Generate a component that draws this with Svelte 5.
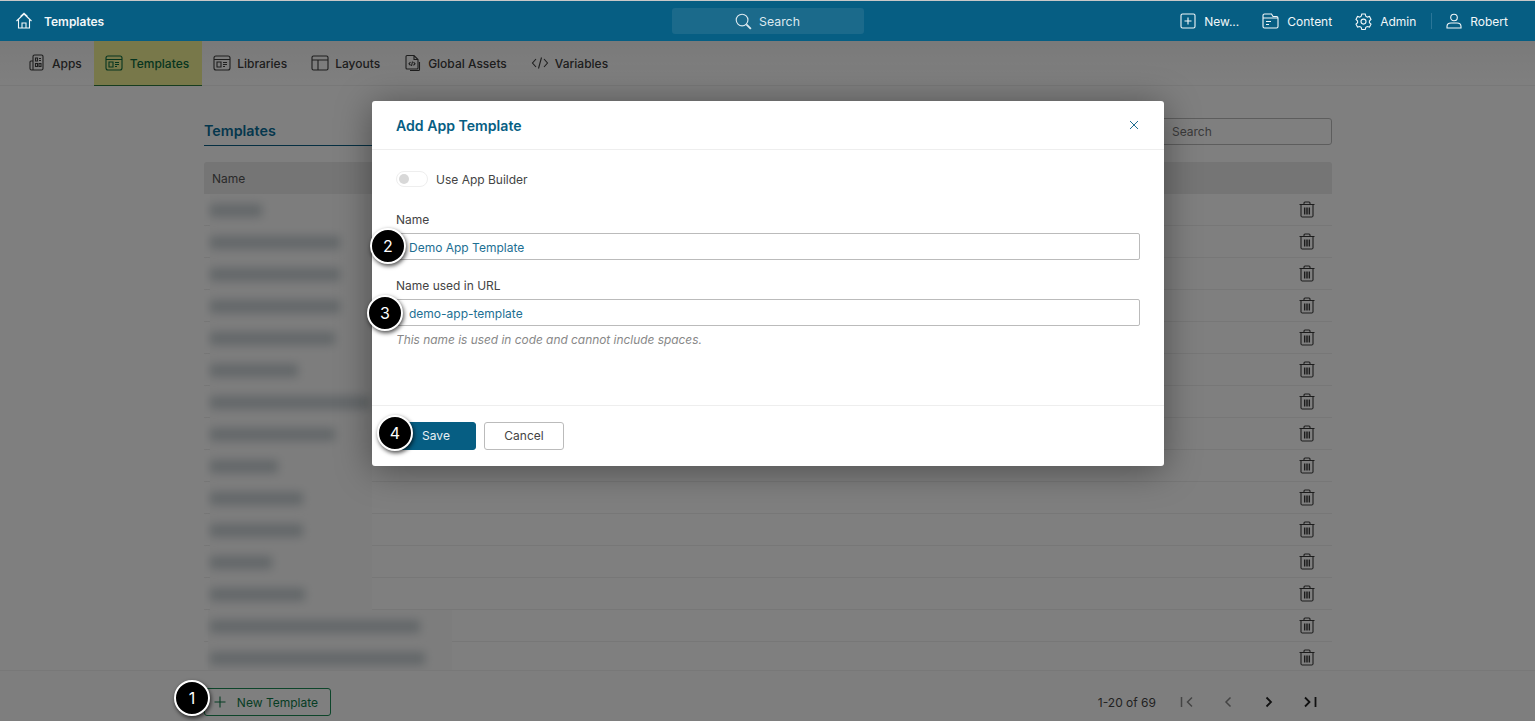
<script>
  const tabs = [
    { name: "Apps", icon: "apps" },
    { name: "Templates", icon: "tpl", active: true },
    { name: "Libraries", icon: "tpl" },
    { name: "Layouts", icon: "layout" },
    { name: "Global Assets", icon: "assets" },
    { name: "Variables", icon: "code" }
  ];
  // widths of the blurred names in the list
  const rows = [52, 130, 130, 130, 125, 88, 160, 125, 68, 93, 93, 62, 95, 210, 215];
</script>

<div class="page">
  <header class="topbar">
    <div class="brand">
      <svg width="18" height="18" viewBox="0 0 18 18" fill="none" stroke="currentColor" stroke-width="1.1">
        <path d="M1.5 9 9 2l7.5 7M3.5 7.5V16h11V7.5M7 16v-5h4v5M5.5 4.5 9 1.2l3.5 3.3" />
      </svg>
      <span>Templates</span>
    </div>
    <div class="search-wrap">
      <div class="search">
        <svg width="17" height="17" viewBox="0 0 18 18" fill="none" stroke="currentColor" stroke-width="1.2">
          <circle cx="7.5" cy="7.5" r="6.2" />
          <path d="m12 12 4.8 4.8" stroke-width="2" />
        </svg>
        <span>Search</span>
      </div>
    </div>
    <nav class="actions">
      <div class="action">
        <svg width="16" height="16" viewBox="0 0 16 16" fill="none" stroke="currentColor" stroke-width="1.1">
          <rect x="1" y="1" width="14" height="14" rx="1.5" />
          <path d="M8 4.5v7M4.5 8h7" />
        </svg>
        <span>New...</span>
      </div>
      <div class="action">
        <svg width="17" height="16" viewBox="0 0 17 16" fill="none" stroke="currentColor" stroke-width="1.1">
          <path d="M1 3v10.500a1.500 1.500 0 0 0 1.500 1.500h12a1.500 1.500 0 0 0 1.500-1.500V5a1.500 1.500 0 0 0-1.500-1.500H11L9.500 1H2.500A1.500 1.500 0 0 0 1 2.500V5h15M4 8.500h5M4 11.500h3" />
        </svg>
        <span>Content</span>
      </div>
      <div class="action">
        <svg width="17" height="17" viewBox="0 0 17 17" fill="none" stroke="currentColor" stroke-width="1.1">
          <path d="M6.800 1h3.400l.6 2.200 1.500.9 2.200-.6 1.500 3-1.600 1.500v1.700l1.600 1.500-1.500 2.900-2.200-.6-1.500.9-.6 2.200H6.800l-.6-2.200-1.500-.9-2.200.6-1.500-2.900L2.600 9.700V8L1 6.500l1.500-3 2.200.6 1.500-.9z" />
          <circle cx="8.500" cy="8.600" r="2.500" />
        </svg>
        <span>Admin</span>
      </div>
      <i class="sep"></i>
      <div class="action">
        <svg width="16" height="16" viewBox="0 0 16 16" fill="none" stroke="currentColor" stroke-width="1.1">
          <circle cx="8" cy="4.500" r="3.300" />
          <path d="M1 15v-1.500C1 11.300 3 10 5 10h6c2 0 4 1.300 4 3.500V15z" />
        </svg>
        <span>Robert</span>
      </div>
    </nav>
  </header>

  <div class="under">
    <div class="tabs">
      {#each tabs as t}
        <div class="tab" class:active={t.active}>
          <svg width="18" height="18" viewBox="0 0 18 18" fill="none" stroke="currentColor" stroke-width="1.1">
            {#if t.icon === "apps"}
              <path d="M5 15.500V2.500A1.500 1.500 0 0 1 6.500 1h7A1.500 1.500 0 0 1 15 2.500v12a1.500 1.500 0 0 1-1.500 1.500h-10A1.500 1.500 0 0 1 2 14.500V8a1 1 0 0 1 1-1h2M7.500 4h2v3h-2zM11 4.500h2M11 6.500h2M7.500 9.500h2v3h-2zM11 9.500h2v3h-2z" />
            {:else if t.icon === "tpl"}
              <rect x="1" y="2" width="16" height="14" rx="2" />
              <path d="M1 5.500h16M4 8h4v5H4zM10 8.500h4M10 10.500h4M10 12.500h2" />
            {:else if t.icon === "layout"}
              <rect x="1" y="2" width="16" height="14" rx="1.500" />
              <path d="M1 6h16M7 6v10" />
            {:else if t.icon === "assets"}
              <path d="M3 1.500h7l4 4V14a1 1 0 0 1-1 1H3a1 1 0 0 1-1-1V2.500a1 1 0 0 1 1-1zM10 1.500V5.500h4M15.500 8v7.500a1 1 0 0 1-1 1H6M6.500 8 5 9.700l1.500 1.700M9.500 8 11 9.700l-1.500 1.700M8.500 7.500l-1 4.500" />
            {:else}
              <path d="M5 5 1.500 9 5 13M13 5l3.500 4-3.500 4M10.500 3.500l-3 11" />
            {/if}
          </svg>
          <span>{t.name}</span>
        </div>
      {/each}
    </div>

    <main class="content">
      <div class="title-row">
        <h2>Templates</h2>
        <input class="list-search" placeholder="Search" />
      </div>
      <div class="table-head">Name</div>
      <div class="table-body">
        {#each rows as w, i}
          <div class="row">
            <div class="name-cell" class:wide={i > 12}>
              <span class="blur" style="width: {w}px"></span>
            </div>
            <svg class="trash" width="16" height="17" viewBox="0 0 16 17" fill="none" stroke="currentColor" stroke-width="1.1">
              <path d="M.5 3.500h15M5 3.500V2a1 1 0 0 1 1-1h4a1 1 0 0 1 1 1v1.500M2 3.500v11.500a1.200 1.200 0 0 0 1.200 1h9.600a1.200 1.200 0 0 0 1.200-1V3.500M5.500 6.500v7M7.200 6.500v7M8.800 6.500v7M10.500 6.500v7" />
            </svg>
          </div>
        {/each}
      </div>
    </main>

    <footer class="bottom">
      <button class="new-btn">
        <svg width="12" height="12" viewBox="0 0 12 12" fill="none" stroke="currentColor" stroke-width="1.1">
          <path d="M6 .5v11M.5 6h11" />
        </svg>
        New Template
      </button>
      <div class="pager">
        <span class="count">1-20 of 69</span>
        <svg class="off" width="14" height="12" viewBox="0 0 14 12" fill="none" stroke="currentColor" stroke-width="1.500"><path d="M1.500 1v10M12 1.500 7.500 6l4.500 4.500" /></svg>
        <svg class="off" width="14" height="12" viewBox="0 0 14 12" fill="none" stroke="currentColor" stroke-width="1.500"><path d="M9.500 1.500 5 6l4.500 4.500" /></svg>
        <svg width="14" height="12" viewBox="0 0 14 12" fill="none" stroke="currentColor" stroke-width="1.800"><path d="M4.500 1.500 9 6l-4.500 4.500" /></svg>
        <svg width="14" height="12" viewBox="0 0 14 12" fill="none" stroke="currentColor" stroke-width="1.800"><path d="M2 1.500 6.500 6 2 10.500M12.500 1v10" /></svg>
      </div>
    </footer>

    <div class="backdrop"></div>
  </div>

  <section class="modal">
    <div class="modal-head">
      <h3>Add App Template</h3>
      <svg width="10" height="10" viewBox="0 0 10 10" fill="none" stroke="currentColor" stroke-width="0.900"><path d="m1 1 8 8M9 1 1 9" /></svg>
    </div>
    <div class="modal-body">
      <div class="toggle-row">
        <span class="toggle"><i></i></span>
        <span>Use App Builder</span>
      </div>
      <div class="field first">
        <label for="tpl-name">Name</label>
        <input id="tpl-name" value="Demo App Template" />
      </div>
      <div class="field">
        <label for="tpl-url">Name used in URL</label>
        <input id="tpl-url" value="demo-app-template" />
        <p>This name is used in code and cannot include spaces.</p>
      </div>
    </div>
    <div class="modal-foot">
      <button class="save">Save</button>
      <button class="cancel">Cancel</button>
    </div>
  </section>

  <b class="callout c1">1</b>
  <b class="callout c2">2</b>
  <b class="callout c3">3</b>
  <b class="callout c4">4</b>
</div>

<style>
  :global(body) {
    margin: 0;
    overflow: hidden;
  }

  .page {
    position: relative;
    width: 1535px;
    height: 721px;
    overflow: hidden;
    display: flex;
    flex-direction: column;
    font-family: Inter, "Liberation Sans", sans-serif;
    font-size: 12px;
    color: #333;
    background: #fff;
  }

  .topbar {
    flex: none;
    height: 40px;
    box-sizing: content-box;
    border-top: 1px solid #c8c8c8;
    background: #065e83;
    color: #f2f7f9;
    display: grid;
    grid-template-columns: 1fr 192px 1fr;
    align-items: center;
  }

  .brand {
    display: flex;
    align-items: center;
    gap: 11px;
    padding-left: 15px;
    font-weight: 600;
  }

  .search-wrap {
    display: flex;
  }

  .search {
    width: 100%;
    height: 26px;
    border-radius: 3px;
    background: #1b6a8b;
    display: flex;
    align-items: center;
    justify-content: center;
    gap: 7px;
    color: #dce9ef;
    font-size: 12.3px;
  }

  .actions {
    display: flex;
    align-items: center;
    justify-content: flex-end;
    gap: 23px;
    padding-right: 27px;
  }

  .action {
    display: flex;
    align-items: center;
    gap: 8px;
  }

  .sep {
    width: 1px;
    height: 16px;
    background: #2a7698;
    margin: 0 -9px 0 -8px;
  }

  .under {
    position: relative;
    flex: 1;
    min-height: 0;
    display: flex;
    flex-direction: column;
    background: #fff;
  }

  .tabs {
    flex: none;
    height: 44px;
    border-bottom: 1px solid #f0f0f0;
    padding-left: 16px;
    display: flex;
    font-weight: 500;
    color: #3c3c3c;
    background: linear-gradient(#f4f4f4, #fff);
  }

  .tab {
    display: flex;
    align-items: center;
    gap: 6px;
    padding: 0 12px;
  }

  .tab.active {
    background: #f0f094;
    border-bottom: 1px solid #2f7a3f;
    color: #0d6b3f;
    margin: 0 -1px -1px 0;
    gap: 7px;
    padding: 0 13px 0 11px;
  }

  .content {
    flex: 1;
    min-height: 0;
    width: 1128px;
    margin-left: 204px;
    overflow: hidden;
    display: flex;
    flex-direction: column;
  }

  .title-row {
    flex: none;
    height: 60px;
    box-sizing: border-box;
    padding-top: 32px;
    display: flex;
    justify-content: space-between;
    align-items: flex-start;
  }

  .title-row h2 {
    margin: 0;
    width: 400px;
    height: 27px;
    border-bottom: 1px solid #0a5f85;
    font-size: 14.3px;
    line-height: 26px;
    font-weight: 600;
    color: #0a6f9a;
  }

  .list-search {
    width: 198px;
    height: 27px;
    box-sizing: border-box;
    border: 1px solid #bbb;
    border-radius: 3px;
    padding: 0 0 0 37px;
    font: 12px Inter, sans-serif;
    background: #fff;
  }

  .table-head {
    flex: none;
    height: 32px;
    box-sizing: border-box;
    margin-top: 16px;
    background: #eaeaea;
    border-radius: 3px 3px 0 0;
    padding: 1px 0 0 8px;
    line-height: 32px;
    color: #555;
  }

  .row {
    height: 32px;
    box-sizing: border-box;
    border-bottom: 1px solid #eee;
    padding: 0 17px 0 6px;
    display: flex;
    align-items: center;
    justify-content: space-between;
  }

  /* the blurred patch hides the row line under it */
  .name-cell {
    width: 162px;
    height: 32px;
    margin-bottom: -1px;
    background: #fbfbfb;
    display: flex;
    align-items: center;
  }

  .name-cell.wide {
    width: 242px;
    margin-left: -2px;
    padding-left: 2px;
  }

  .blur {
    height: 13px;
    background: #c6ced2;
    filter: blur(5px);
  }

  .trash {
    color: #3a3a3a;
  }

  .bottom {
    flex: none;
    height: 51px;
    box-sizing: border-box;
    border-top: 1px solid #f0f0f0;
    padding: 0 218px 5px 204px;
    display: flex;
    align-items: flex-end;
    justify-content: space-between;
    background: #fdfdfd;
  }

  .new-btn {
    width: 127px;
    height: 28px;
    border: 1px solid #1a8a55;
    border-radius: 3px;
    background: #fff;
    color: #0d7a48;
    font: 12px Inter, sans-serif;
    display: flex;
    align-items: center;
    justify-content: flex-end;
    gap: 11px;
    padding: 0 12px 0 0;
  }

  .pager {
    height: 28px;
    display: flex;
    align-items: center;
    gap: 27px;
    color: #222;
  }

  .count {
    margin-right: -3px;
    color: #444;
  }

  .pager .off {
    color: #888;
  }

  .backdrop {
    position: absolute;
    inset: 0;
    background: rgba(0, 0, 0, 0.5);
  }

  .modal {
    position: absolute;
    left: 372px;
    top: 101px;
    width: 792px;
    height: 365px;
    background: #fff;
    border-radius: 3px;
    box-shadow: 0 4px 36px rgba(0, 0, 0, 0.4);
    display: flex;
    flex-direction: column;
  }

  .modal-head {
    flex: none;
    height: 48px;
    border-bottom: 1px solid #eee;
    padding: 0 25px 0 24px;
    display: flex;
    align-items: center;
    justify-content: space-between;
    color: #065e83;
  }

  .modal-head h3 {
    margin: 0;
    font-size: 14.1px;
    font-weight: 600;
  }

  .modal-body {
    flex: 1;
    padding: 0 24px;
  }

  .toggle-row {
    height: 58px;
    display: flex;
    align-items: center;
    gap: 8px;
    color: #444;
  }

  .toggle {
    width: 32px;
    height: 16px;
    box-sizing: border-box;
    border: 1px solid #eee;
    border-radius: 8px;
    display: flex;
    align-items: center;
    padding-left: 2px;
  }

  .toggle i {
    width: 10px;
    height: 10px;
    border-radius: 50%;
    background: #d8d8d8;
  }

  .field {
    margin-bottom: 19px;
  }

  .field.first {
    margin-top: 5px;
  }

  .field label {
    display: block;
    height: 14px;
    line-height: 14px;
    margin-bottom: 6px;
    color: #444;
  }

  .field input {
    display: block;
    width: 100%;
    height: 27px;
    box-sizing: border-box;
    border: 1px solid #bbb;
    border-radius: 2px;
    padding: 1px 12px 0;
    font: 12px Inter, sans-serif;
    color: #1d6f93;
    outline: none;
  }

  .field p {
    margin: 6px 0 0;
    font-size: 11.9px;
    font-style: italic;
    color: #888;
  }

  .modal-foot {
    flex: none;
    height: 60px;
    border-top: 1px solid #eee;
    padding-left: 24px;
    display: flex;
    align-items: center;
    gap: 8px;
  }

  .modal-foot button {
    width: 80px;
    height: 28px;
    border-radius: 3px;
    padding: 0 0 2px;
    font: 12px Inter, sans-serif;
  }

  .save {
    background: #065e83;
    border: 1px solid #065e83;
    color: #e8f1f5;
  }

  .cancel {
    background: #fff;
    border: 1px solid #bbb;
    color: #444;
  }

  .callout {
    position: absolute;
    width: 32px;
    height: 32px;
    box-sizing: content-box;
    border: 2px solid #fff;
    border-radius: 50%;
    background: #000;
    color: #fff;
    font: 400 16px/32px Inter, sans-serif;
    text-align: center;
    box-shadow: 1px 2px 4px rgba(0, 0, 0, 0.7);
  }

  .c1 { left: 174px; top: 680px; }
  .c2 { left: 370px; top: 228px; }
  .c3 { left: 367px; top: 295px; }
  .c4 { left: 377px; top: 415px; }
</style>
